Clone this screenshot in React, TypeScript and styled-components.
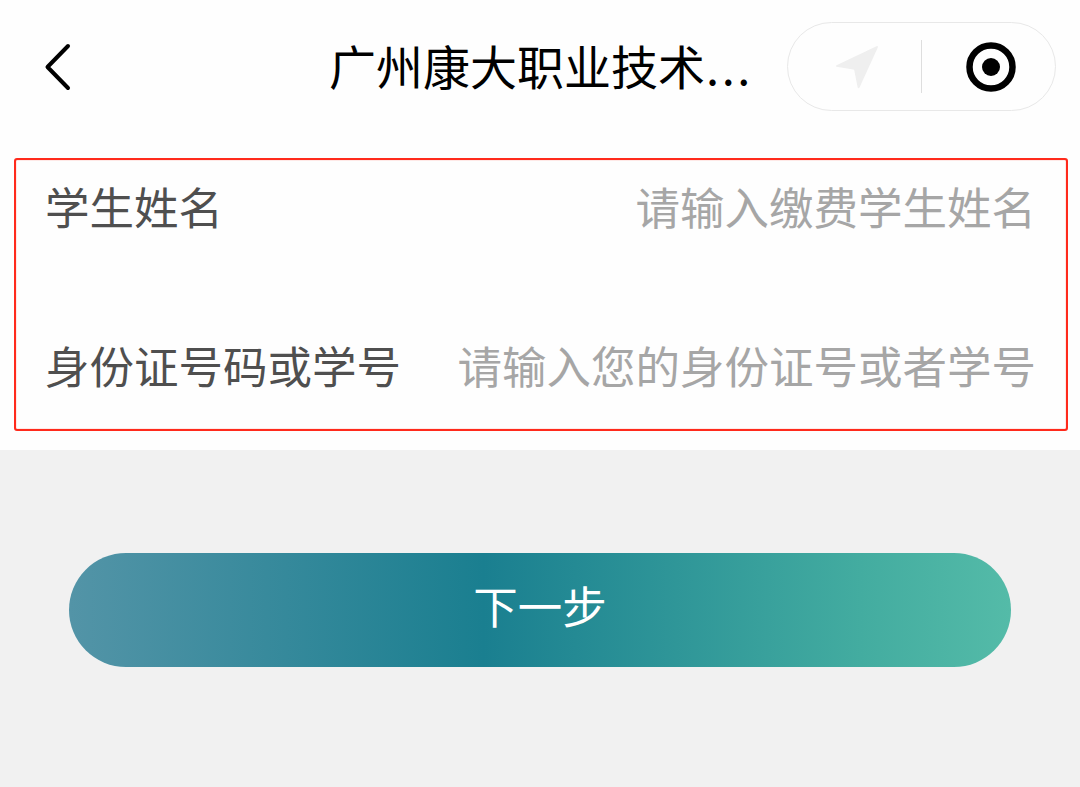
import * as React from "react";
import styled, { createGlobalStyle } from "styled-components";

const GlobalStyle = createGlobalStyle`
  body {
    margin: 0;
    background-color: #f1f1f1;
    font-family: "Noto Sans CJK SC", "Noto Sans", sans-serif;
  }

  * {
    box-sizing: border-box;
  }
`;

const Page = styled.div`
  width: 1080px;
  height: 787px;
  overflow: hidden;
  background-color: #f1f1f1;
`;

const Top = styled.div`
  height: 450px;
  padding: 22px 12px 0 14px;
  background-color: #fefefe;
`;

const HeaderBar = styled.header`
  height: 89px;
  display: flex;
  align-items: center;
  padding: 0 12px 0 30px;
`;

const BackButton = styled.a`
  display: flex;
  width: 28px;
  height: 48px;
`;

const Title = styled.h1`
  flex: 1;
  margin: 0;
  padding: 0 0 4px 257px;
  font-size: 47px;
  line-height: 85px;
  font-weight: 400;
  color: #000;
  white-space: nowrap;

  .dots {
    margin-left: 1px;
    letter-spacing: 2.6px;
  }
`;

const Capsule = styled.div`
  width: 269px;
  height: 89px;
  display: flex;
  align-items: center;
  border: 1.5px solid #e8e8e8;
  border-radius: 45px;

  .half {
    width: 133px;
    display: flex;
    justify-content: center;
    padding-left: 5px;
  }

  .line {
    width: 1px;
    height: 53px;
    background-color: #dedede;
  }
`;

const Form = styled.div`
  height: 273px;
  margin-top: 47px;
  padding: 0 30px 0 29px;
  border: 2px solid #ff2a1c;
  border-radius: 3px;
  box-shadow: inset 0 0 1px #ff2a1c;
`;

const Row = styled.div<{ $height: number }>`
  height: ${(props) => props.$height}px;
  display: flex;
  justify-content: space-between;
  align-items: flex-start;
  padding-top: 14px;
  font-size: 44.5px;
  line-height: 64px;
  white-space: nowrap;
`;

const Label = styled.span`
  color: #4f4f4f;
`;

const Placeholder = styled.span`
  color: #a6a6a6;
`;

const Bottom = styled.div`
  padding: 103px 69px 0;
`;

const NextButton = styled.button`
  display: block;
  width: 942px;
  height: 114px;
  padding: 0 0 10px;
  border: none;
  border-radius: 57px;
  background: linear-gradient(
    90deg,
    #5394a7 0%,
    #1a7f90 44%,
    #43aca0 84%,
    #54bba8 100%
  );
  color: #fff;
  font-family: inherit;
  font-size: 44.5px;
  line-height: 64px;
`;

const fields = [
  { label: "学生姓名", placeholder: "请输入缴费学生姓名", height: 159 },
  {
    label: "身份证号码或学号",
    placeholder: "请输入您的身份证号或者学号",
    height: 110
  }
];

const Header: React.FC = (): React.ReactElement => (
  <HeaderBar>
    <BackButton>
      <svg width="28" height="48" viewBox="0 0 28 48" fill="none">
        <path
          d="M24 3L3.5 24L24 45"
          stroke="#000"
          strokeWidth="4"
          strokeLinecap="round"
          strokeLinejoin="round"
        />
      </svg>
    </BackButton>
    <Title>
      广州康大职业技术<span className="dots">...</span>
    </Title>
    <Capsule>
      <div className="half">
        <svg width="44" height="44" viewBox="0 0 44 44">
          <path
            d="M1.5 20.2L41.5 1.2Q43.5 0.6 42.8 2.6L24.5 42.6Q23.2 44 22.6 42.2L19.3 25.6Q19 24.8 18.2 24.6L1.5 21.8Q0 21 1.5 20.2Z"
            fill="#efefef"
          />
        </svg>
      </div>
      <div className="line" />
      <div className="half">
        <svg width="50" height="50" viewBox="0 0 50 50">
          <circle
            cx="25"
            cy="25"
            r="21.5"
            fill="none"
            stroke="#000"
            strokeWidth="6.5"
          />
          <circle cx="25" cy="25" r="9" fill="#000" />
        </svg>
      </div>
    </Capsule>
  </HeaderBar>
);

const App: React.FC = (): React.ReactElement => {
  return (
    <Page>
      <GlobalStyle />
      <Top>
        <Header />
        <Form>
          {fields.map(({ label, placeholder, height }) => (
            <Row key={label} $height={height}>
              <Label>{label}</Label>
              <Placeholder>{placeholder}</Placeholder>
            </Row>
          ))}
        </Form>
      </Top>
      <Bottom>
        <NextButton>下一步</NextButton>
      </Bottom>
    </Page>
  );
};

export default App;
